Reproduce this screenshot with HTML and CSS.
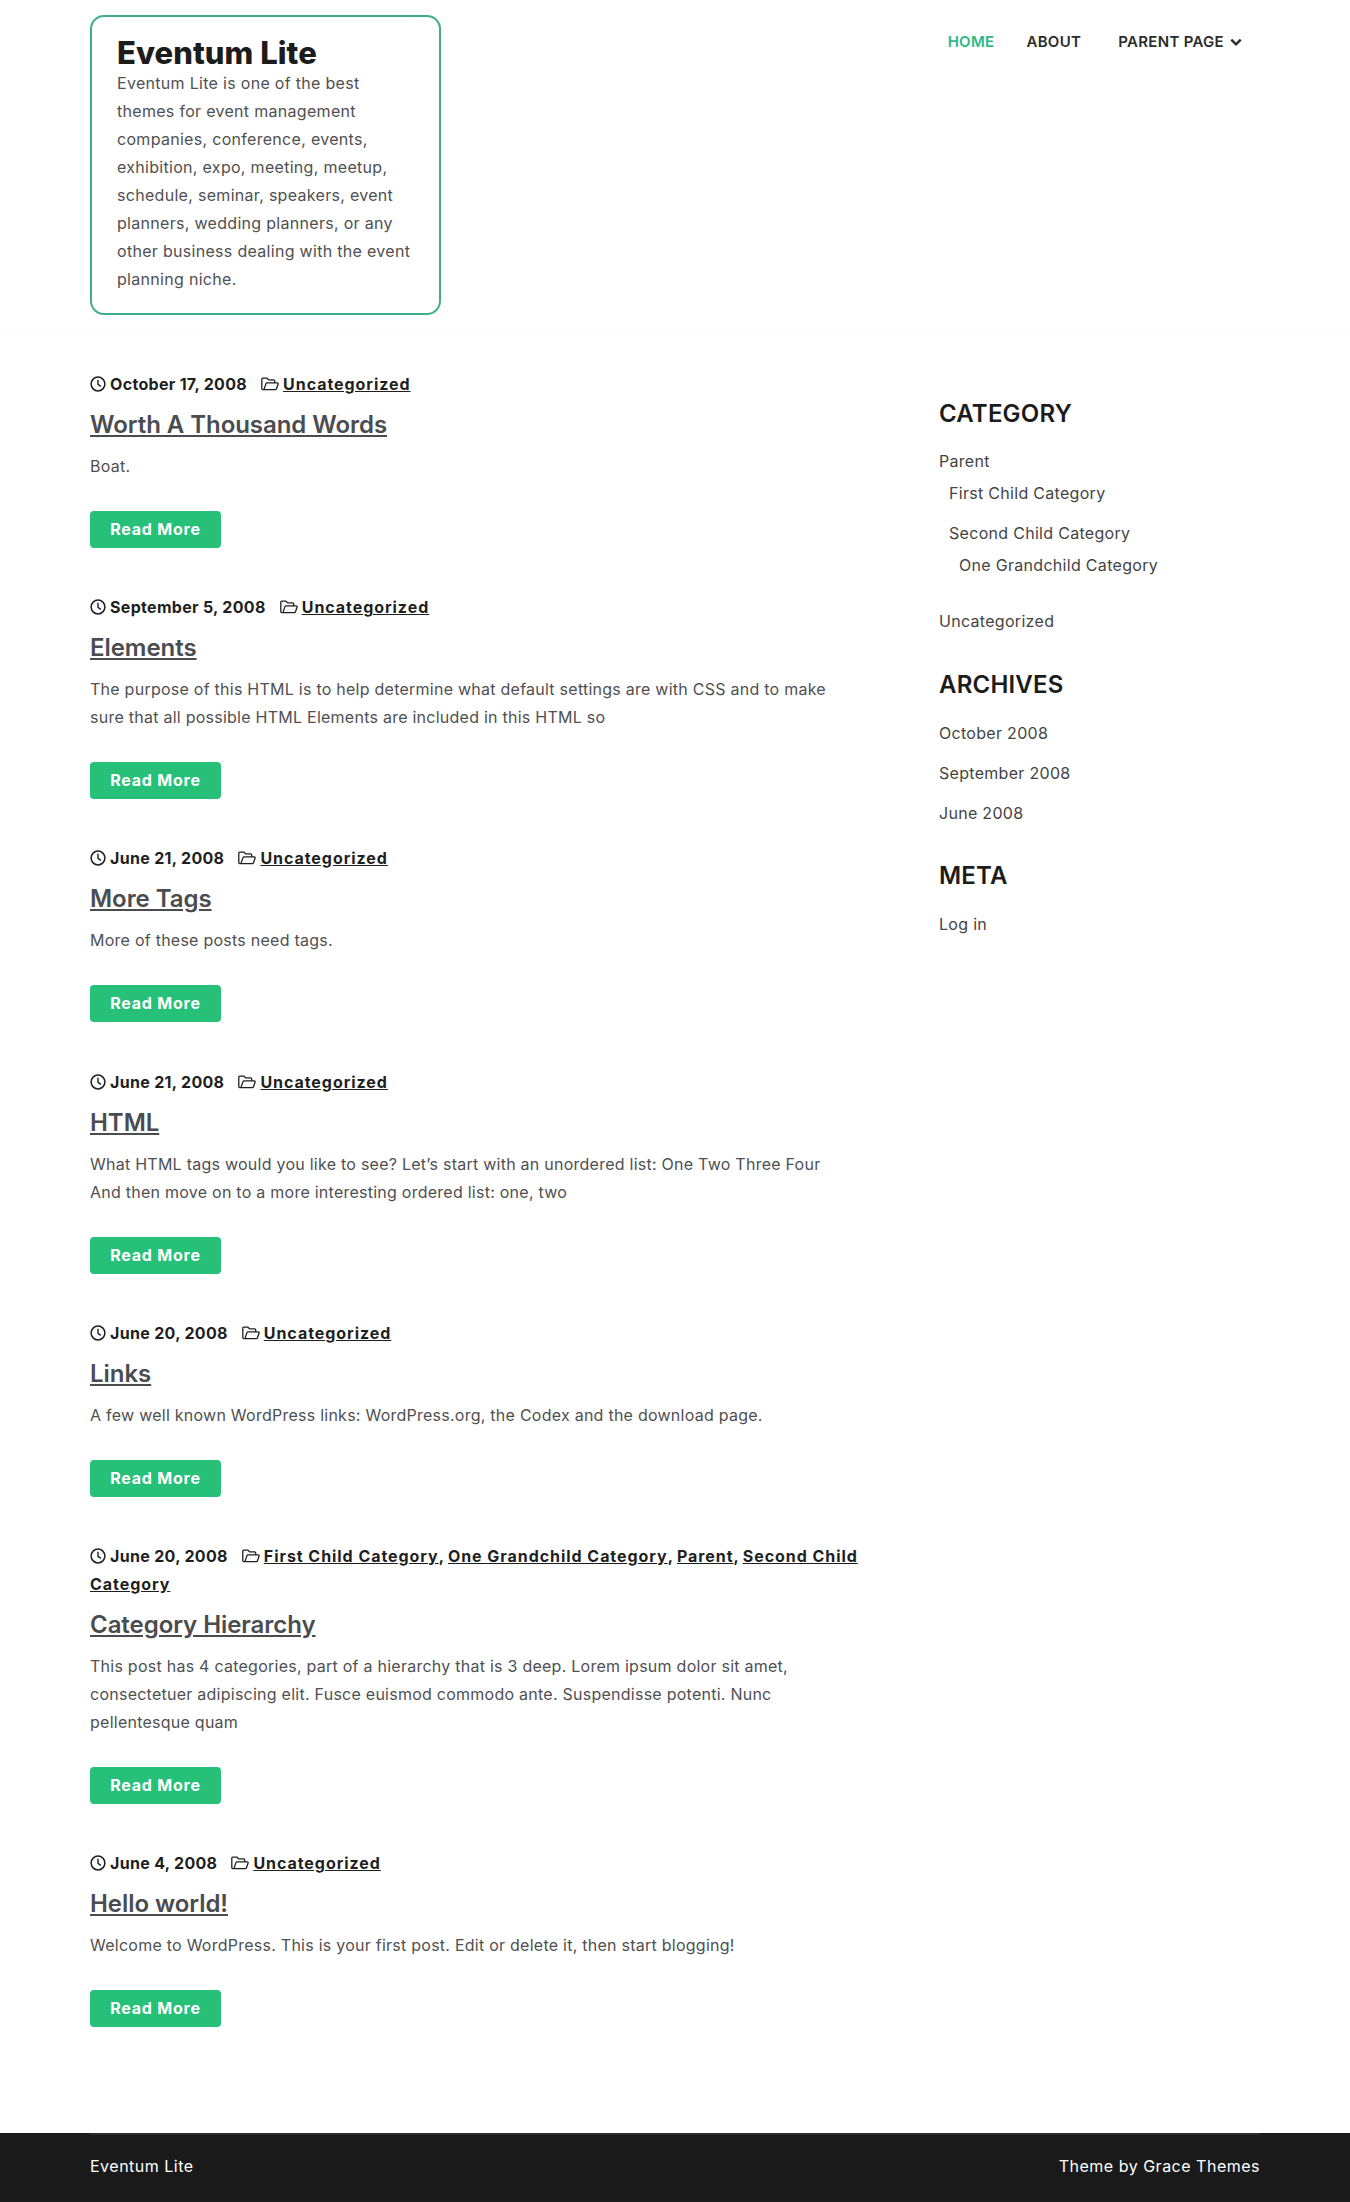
FILE: index.html
```html
<!DOCTYPE html>
<html lang="en">
<head>
    <meta charset="UTF-8">
    <meta name="viewport" content="width=device-width, initial-scale=1.0">
    <title>Eventum Lite</title>
    <link rel="stylesheet" href="styles.css">
</head>
<body>
    <svg class="icon-defs" aria-hidden="true">
        <symbol id="i-clock" viewBox="0 0 16 16">
            <circle cx="8" cy="8" r="6.9" fill="none" stroke="currentColor" stroke-width="1.5"/>
            <path d="M8 3.8V8.4L10.8 10.4" fill="none" stroke="currentColor" stroke-width="1.4"/>
        </symbol>
        <symbol id="i-folder" viewBox="0 0 18 14">
            <path d="M2.9 12.6H1.6C1.1 12.6.8 12.2.8 11.8V2.2C.8 1.6 1.2 1.2 1.8 1.2H6L7.6 2.9H12.6C13.3 2.9 13.7 3.4 13.7 4V5.8M2.9 12.6L5 6.6C5.2 6.1 5.5 5.8 6 5.8H16.2C16.9 5.8 17.3 6.4 17.1 7L15.5 11.7C15.3 12.3 14.9 12.6 14.3 12.6Z" fill="none" stroke="currentColor" stroke-width="1.3" stroke-linejoin="round"/>
        </symbol>
    </svg>

    <header class="site-header">
        <div class="wrap header-row">
            <div class="branding">
                <h1 class="site-title">Eventum Lite</h1>
                <p class="site-desc">Eventum Lite is one of the best themes for event management companies, conference, events, exhibition, expo, meeting, meetup, schedule, seminar, speakers, event planners, wedding planners, or any other business dealing with the event planning niche.</p>
            </div>
            <nav class="main-nav">
                <a href="#" class="current">Home</a>
                <a href="#" class="about">About</a>
                <a href="#" class="parent">Parent Page
                    <svg class="chevron" viewBox="0 0 12 9"><path d="M1.3 1.6L6 6.4L10.7 1.6" fill="none" stroke="currentColor" stroke-width="2.4"/></svg>
                </a>
            </nav>
        </div>
    </header>

    <div class="wrap page-row">
        <main class="posts">
            <article class="post">
                <div class="post-meta"><span class="meta-date"><svg class="ico"><use href="#i-clock"/></svg> October 17, 2008</span><span class="meta-cats"><svg class="ico ico-folder"><use href="#i-folder"/></svg> <a href="#">Uncategorized</a></span></div>
                <h2 class="post-title"><a href="#">Worth A Thousand Words</a></h2>
                <p>Boat.</p>
                <a href="#" class="read-more">Read More</a>
            </article>

            <article class="post">
                <div class="post-meta"><span class="meta-date"><svg class="ico"><use href="#i-clock"/></svg> September 5, 2008</span><span class="meta-cats"><svg class="ico ico-folder"><use href="#i-folder"/></svg> <a href="#">Uncategorized</a></span></div>
                <h2 class="post-title"><a href="#">Elements</a></h2>
                <p>The purpose of this HTML is to help determine what default settings are with CSS and to make sure that all possible HTML Elements are included in this HTML so</p>
                <a href="#" class="read-more">Read More</a>
            </article>

            <article class="post">
                <div class="post-meta"><span class="meta-date"><svg class="ico"><use href="#i-clock"/></svg> June 21, 2008</span><span class="meta-cats"><svg class="ico ico-folder"><use href="#i-folder"/></svg> <a href="#">Uncategorized</a></span></div>
                <h2 class="post-title"><a href="#">More Tags</a></h2>
                <p>More of these posts need tags.</p>
                <a href="#" class="read-more">Read More</a>
            </article>

            <article class="post">
                <div class="post-meta"><span class="meta-date"><svg class="ico"><use href="#i-clock"/></svg> June 21, 2008</span><span class="meta-cats"><svg class="ico ico-folder"><use href="#i-folder"/></svg> <a href="#">Uncategorized</a></span></div>
                <h2 class="post-title"><a href="#">HTML</a></h2>
                <p>What HTML tags would you like to see? Let’s start with an unordered list: One Two Three Four And then move on to a more interesting ordered list: one, two</p>
                <a href="#" class="read-more">Read More</a>
            </article>

            <article class="post">
                <div class="post-meta"><span class="meta-date"><svg class="ico"><use href="#i-clock"/></svg> June 20, 2008</span><span class="meta-cats"><svg class="ico ico-folder"><use href="#i-folder"/></svg> <a href="#">Uncategorized</a></span></div>
                <h2 class="post-title"><a href="#">Links</a></h2>
                <p>A few well known WordPress links: WordPress.org, the Codex and the download page.</p>
                <a href="#" class="read-more">Read More</a>
            </article>

            <article class="post">
                <div class="post-meta"><span class="meta-date"><svg class="ico"><use href="#i-clock"/></svg> June 20, 2008</span><span class="meta-cats"><svg class="ico ico-folder"><use href="#i-folder"/></svg> <a href="#">First Child Category</a>, <a href="#">One Grandchild Category</a>, <a href="#">Parent</a>, <a href="#">Second Child Category</a></span></div>
                <h2 class="post-title"><a href="#">Category Hierarchy</a></h2>
                <p>This post has 4 categories, part of a hierarchy that is 3 deep. Lorem ipsum dolor sit amet, consectetuer adipiscing elit. Fusce euismod commodo ante. Suspendisse potenti. Nunc pellentesque quam</p>
                <a href="#" class="read-more">Read More</a>
            </article>

            <article class="post">
                <div class="post-meta"><span class="meta-date"><svg class="ico"><use href="#i-clock"/></svg> June 4, 2008</span><span class="meta-cats"><svg class="ico ico-folder"><use href="#i-folder"/></svg> <a href="#">Uncategorized</a></span></div>
                <h2 class="post-title"><a href="#">Hello world!</a></h2>
                <p>Welcome to WordPress. This is your first post. Edit or delete it, then start blogging!</p>
                <a href="#" class="read-more">Read More</a>
            </article>
        </main>

        <aside class="sidebar">
            <section class="widget">
                <h3 class="widget-title">Category</h3>
                <ul class="cat-list">
                    <li><a href="#">Parent</a>
                        <ul>
                            <li><a href="#">First Child Category</a></li>
                            <li><a href="#">Second Child Category</a>
                                <ul>
                                    <li><a href="#">One Grandchild Category</a></li>
                                </ul>
                            </li>
                        </ul>
                    </li>
                    <li><a href="#">Uncategorized</a></li>
                </ul>
            </section>
            <section class="widget">
                <h3 class="widget-title">Archives</h3>
                <ul class="plain-list">
                    <li><a href="#">October 2008</a></li>
                    <li><a href="#">September 2008</a></li>
                    <li><a href="#">June 2008</a></li>
                </ul>
            </section>
            <section class="widget">
                <h3 class="widget-title">Meta</h3>
                <ul class="plain-list">
                    <li><a href="#">Log in</a></li>
                </ul>
            </section>
        </aside>
    </div>

    <footer class="site-footer">
        <div class="wrap footer-row">
            <span>Eventum Lite</span>
            <span>Theme by Grace Themes</span>
        </div>
    </footer>
</body>
</html>
```

FILE: styles.css
```css
* {
    margin: 0;
    padding: 0;
    box-sizing: border-box;
}

body {
    font-family: Inter, "Open Sans", sans-serif;
    font-size: 16px;
    line-height: 28px;
    color: #4f5052;
    background: #fff;
    letter-spacing: 0.3px;
}

a {
    color: inherit;
    text-decoration: none;
}

.icon-defs {
    display: none;
}

.wrap {
    width: 1170px;
    margin: 0 auto;
}

.site-header {
    height: 330px;
    box-shadow: 0 2px 6px rgba(0, 0, 0, 0.02);
}

.header-row {
    display: flex;
    justify-content: space-between;
    align-items: flex-start;
}

.branding {
    width: 351px;
    height: 300px;
    margin-top: 15px;
    padding: 19px 25px;
    border: 2px solid #3fae8c;
    border-radius: 14px;
}

.site-title {
    font-size: 31px;
    line-height: 33px;
    font-weight: 800;
    letter-spacing: 0.05px;
    color: #1c1c1c;
}

.main-nav {
    display: flex;
    align-items: center;
    height: 28px;
    margin: 28px 18px 0 0;
    font-size: 15px;
    font-weight: 600;
    text-transform: uppercase;
    color: #2c2c2c;
}

.main-nav .current {
    color: #2bb985;
}

.main-nav .about {
    margin-left: 32px;
}

.main-nav .parent {
    display: flex;
    align-items: center;
    gap: 6px;
    margin-left: 37px;
}

.chevron {
    width: 12px;
    height: 9px;
}

.page-row {
    display: flex;
    justify-content: space-between;
    padding-top: 40px;
}

.posts {
    width: 768px;
    padding-bottom: 106px;
}

.post {
    margin-bottom: 45.2px;
}

.post:last-child {
    margin-bottom: 0;
}

.post-meta {
    font-weight: 700;
    letter-spacing: 0.3px;
    color: #1f1f1f;
}

.meta-date {
    margin-right: 14px;
}

.post-meta a {
    letter-spacing: 0.95px;
    text-decoration: underline;
}

.ico {
    width: 16px;
    height: 16px;
    vertical-align: -2px;
}

.ico-folder {
    width: 18px;
    height: 14px;
    vertical-align: -1px;
}

.post-title {
    margin-top: 9px;
    font-size: 24px;
    line-height: 36px;
    font-weight: 600;
    letter-spacing: -0.05px;
    color: #4a4c50;
}

.post-title a {
    text-decoration: underline;
}

.post p {
    max-width: 750px;
    margin-top: 9px;
    letter-spacing: 0.25px;
}

.read-more {
    display: block;
    width: 131px;
    height: 37px;
    margin-top: 31px;
    border-radius: 4px;
    background: #27c079;
    color: #fff;
    font-size: 16px;
    line-height: 37px;
    font-weight: 700;
    letter-spacing: 0.8px;
    text-align: center;
}

.sidebar {
    width: 321px;
    padding-top: 26px;
    color: #444;
}

.widget {
    margin-bottom: 31.5px;
}

.widget-title {
    margin-bottom: 16px;
    font-size: 24px;
    line-height: 36px;
    font-weight: 600;
    letter-spacing: 0.2px;
    text-transform: uppercase;
    color: #1c1c1c;
}

.sidebar ul {
    list-style: none;
}

.plain-list li {
    margin-bottom: 12px;
}

.cat-list {
    margin: -1px 0 1px;
}

.cat-list > li {
    margin-bottom: 28px;
}

.cat-list ul {
    padding-left: 10px;
    margin-top: 4px;
}

.cat-list ul li {
    margin-bottom: 12px;
}

.cat-list ul ul li {
    margin-bottom: 0;
}

.site-footer {
    height: 69px;
    background: #1a1a1a;
    color: #fff;
    letter-spacing: 0.5px;
}

.footer-row {
    display: flex;
    justify-content: space-between;
    padding-top: 17px;
    border-top: 2px solid #2b2b2b;
}
```
